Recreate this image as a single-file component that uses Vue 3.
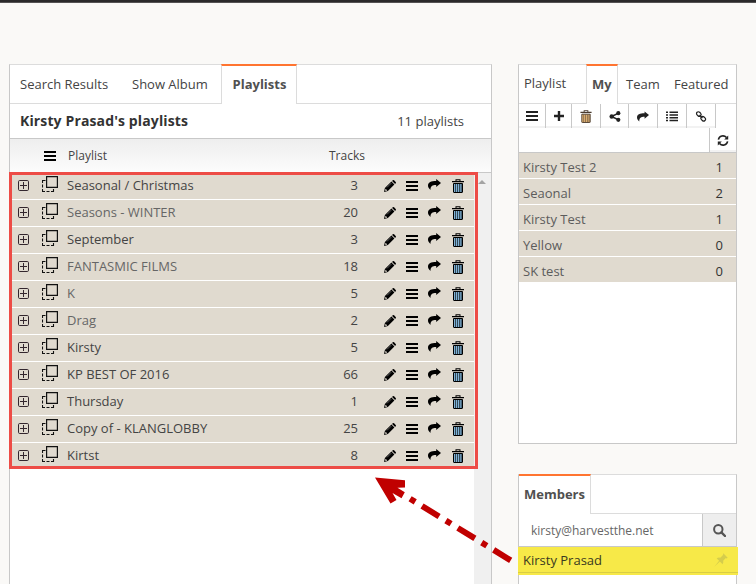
<template>
  <div class="page">
    <svg class="sprite">
      <defs>
        <symbol id="bars" viewBox="0 0 12 10">
          <path d="M0 0h12v2H0zM0 4h12v2H0zM0 8h12v2H0z" />
        </symbol>
        <symbol id="plus-box" viewBox="0 0 11 11">
          <rect x="0.5" y="0.5" width="10" height="10" rx="1.2" fill="none" stroke="currentColor" />
          <path d="M5 2h1v3h3v1H6v3H5V6H2V5h3z" />
        </symbol>
        <symbol id="copy" viewBox="0 0 16 16">
          <path d="M4.600 0.600h10.800v10.800h-10.800z" fill="none" stroke="currentColor" stroke-width="1.200" />
          <path d="M3.500 4.500H0.500V7M0.500 8.500v3M0.500 13v2.500H3M4.500 15.500h3M9 15.500H11.500V13" fill="none" stroke="currentColor" stroke-width="1.100" />
        </symbol>
        <symbol id="pencil" viewBox="0 0 12 12">
          <path d="M0 12l0.9-3.900L7.400 1.600 10.400 4.600 3.900 11.100zM8.100 0.900l0.600-0.600q0.700-0.600 1.400 0l1.600 1.600q0.600 0.700 0 1.400l-0.600 0.600z" />
          <path d="M1.600 8.700l1.700 1.700-1.600 0.500-0.600-0.600z" fill="#e0dacf" />
          <path d="M3 7.400l4.300-4.300" stroke="#999" stroke-width="0.600" />
        </symbol>
        <symbol id="share" viewBox="0 0 13 11">
          <path d="M8.200 0l4.800 4-4.800 4V5.900C4.800 5.800 2.300 6.800 2.500 11 0.800 9.600 0 8.200 0 6.600 0 3.400 3 2 8.200 2z" />
        </symbol>
        <symbol id="trash" viewBox="0 0 12 14">
          <path d="M0 2h12v1.200H0zM3.500 2V0.200h5V2H7.500V1.200h-3V2z" />
          <path d="M1.500 4.500h9V13q0 0.500-0.500 0.500H2q-0.500 0-0.500-0.500z" class="can" stroke="currentColor" />
          <path d="M3.500 5v8M5.500 5v8M7.500 5v8M9.200 5v8" class="ribs" stroke="currentColor" />
        </symbol>
        <symbol id="plus" viewBox="0 0 10 10">
          <path d="M3.800 0h2.400v3.800H10v2.400H6.200V10H3.800V6.200H0V3.800h3.800z" />
        </symbol>
        <symbol id="nodes" viewBox="0 0 11 11">
          <path d="M2.200 5.500L9 2.200M2.200 5.500L9 8.800" stroke="currentColor" stroke-width="1.500" />
          <circle cx="2.200" cy="5.500" r="2.200" />
          <circle cx="8.800" cy="2.200" r="2.100" />
          <circle cx="8.800" cy="8.800" r="2.100" />
        </symbol>
        <symbol id="list" viewBox="0 0 12 10">
          <path d="M0 0h2v1.500H0zM0 2.800h2v1.500H0zM0 5.500h2v1.500H0zM0 8.200h2v1.500H0zM3.500 0H12v1.500H3.500zM3.500 2.800H12v1.500H3.500zM3.500 5.500H12V7H3.500zM3.500 8.200H12v1.500H3.500z" />
        </symbol>
        <symbol id="link" viewBox="0 0 12 12">
          <g fill="none" stroke="currentColor" stroke-width="1.300">
            <rect x="0.900" y="1.300" width="5.400" height="4" rx="2" transform="rotate(45 3.600 3.300)" />
            <rect x="5.700" y="6.500" width="5.400" height="4" rx="2" transform="rotate(45 8.400 8.500)" />
            <path d="M4.400 4.400l3.200 3.200" />
          </g>
        </symbol>
        <symbol id="refresh" viewBox="0 0 11 11">
          <path d="M0.900 4.700C1.600 0.600 6.500-0.300 9 2.600M10.100 6.300C9.400 10.400 4.500 11.300 2 8.400" fill="none" stroke="currentColor" stroke-width="1.600" />
          <path d="M10.700 0.400v4H6.700zM0.300 10.600v-4h4z" />
        </symbol>
        <symbol id="search" viewBox="0 0 13 13">
          <circle cx="5.300" cy="5.300" r="4.200" fill="none" stroke="currentColor" stroke-width="2" />
          <path d="M8.400 8.400l3.600 3.600" stroke="currentColor" stroke-width="2.400" stroke-linecap="round" />
        </symbol>
        <symbol id="pin" viewBox="0 0 14 14">
          <path d="M9.300 0.300l4.400 4.400-1 0.700-0.900-0.300-2.600 2.600q0.500 2-0.700 3.500L5.900 8.600 0.300 13.700 5.100 7.800 2.700 5.400q1.500-1.300 3.600-0.700L9 2z" />
        </symbol>
      </defs>
    </svg>

    <main class="panel browser">
      <nav class="tabs">
        <a class="tab">Search Results</a>
        <a class="tab second">Show Album</a>
        <a class="tab active">Playlists</a>
      </nav>
      <div class="heading">
        <h1>Kirsty Prasad's playlists</h1>
        <span>{{ playlists.length }} playlists</span>
      </div>
      <div class="columns">
        <svg class="bars"><use href="#bars" /></svg>
        <span class="name">Playlist</span>
        <span class="tracks">Tracks</span>
      </div>
      <div class="body">
        <ul class="rows">
          <li v-for="item in playlists" :key="item.name" class="row">
            <svg class="expand"><use href="#plus-box" /></svg>
            <svg class="copy"><use href="#copy" /></svg>
            <span :class="['name', { soft: item.soft }]">{{ item.name }}</span>
            <span class="count">{{ item.tracks }}</span>
            <span class="actions">
              <svg class="pencil"><use href="#pencil" /></svg>
              <svg class="bars"><use href="#bars" /></svg>
              <svg class="share"><use href="#share" /></svg>
              <svg class="trash"><use href="#trash" /></svg>
            </span>
          </li>
        </ul>
        <div class="scrollbar"><i></i></div>
        <div class="highlight"></div>
      </div>
    </main>

    <aside class="side">
      <section class="panel mine">
        <nav class="tabs">
          <a class="tab first">Playlist</a>
          <a class="tab active">My</a>
          <a class="tab">Team</a>
          <a class="tab">Featured</a>
        </nav>
        <div class="toolbar">
          <button v-for="icon in tools" :key="icon" :class="'tool-' + icon">
            <svg><use :href="'#' + icon" /></svg>
          </button>
        </div>
        <div class="toolbar end">
          <button class="tool-refresh"><svg><use href="#refresh" /></svg></button>
        </div>
        <ul class="list">
          <li v-for="item in mine" :key="item.name">
            <span>{{ item.name }}</span>
            <b>{{ item.count }}</b>
          </li>
        </ul>
      </section>

      <section class="panel members">
        <nav class="tabs">
          <a class="tab active">Members</a>
        </nav>
        <div class="search">
          <input v-model="query" type="text" />
          <button><svg><use href="#search" /></svg></button>
        </div>
        <div class="member">
          <span>Kirsty Prasad</span>
          <svg><use href="#pin" /></svg>
        </div>
      </section>
    </aside>

    <svg class="arrow" viewBox="0 0 756 584">
      <path d="M375 477.500L405 480.300V487.500L397.500 487.800 404.800 492.300 401.500 498.300 392.500 493 396.500 500 390.500 503.500z" />
      <line x1="410.100" y1="498.700" x2="510.900" y2="560.500" />
    </svg>
  </div>
</template>

<script setup>
import { ref } from 'vue'

const playlists = [
  { name: 'Seasonal / Christmas', tracks: 3 },
  { name: 'Seasons - WINTER', tracks: 20, soft: true },
  { name: 'September', tracks: 3 },
  { name: 'FANTASMIC FILMS', tracks: 18, soft: true },
  { name: 'K', tracks: 5, soft: true },
  { name: 'Drag', tracks: 2, soft: true },
  { name: 'Kirsty', tracks: 5 },
  { name: 'KP BEST OF 2016', tracks: 66 },
  { name: 'Thursday', tracks: 1 },
  { name: 'Copy of - KLANGLOBBY', tracks: 25 },
  { name: 'Kirtst', tracks: 8 }
]

const tools = ['bars', 'plus', 'trash', 'nodes', 'share', 'list', 'link']

const mine = [
  { name: 'Kirsty Test 2', count: 1 },
  { name: 'Seaonal', count: 2 },
  { name: 'Kirsty Test', count: 1 },
  { name: 'Yellow', count: 0 },
  { name: 'SK test', count: 0 }
]

const query = ref('kirsty@harvestthe.net')
</script>

<style>
body {
  margin: 0;
  overflow: hidden;
}
</style>

<style scoped>
* {
  box-sizing: border-box;
}
.page {
  position: relative;
  display: flex;
  align-items: flex-start;
  gap: 26px;
  height: 584px;
  padding: 62px 0 0 9px;
  border-top: 2px solid #2b2a2b;
  background: #faf9f7;
  box-shadow: inset 0 1px #555354;
  color: #444;
  font: 13px/18px "Open Sans", "Noto Sans", sans-serif;
  overflow: hidden;
}
.sprite {
  position: absolute;
  width: 0;
  height: 0;
}
svg {
  display: block;
  flex: none;
  fill: currentColor;
}
ul {
  margin: 0;
  padding: 0;
  list-style: none;
}
.panel {
  border: 1px solid #c8c8c8;
  border-top-color: #dcdcdc;
  background: #fff;
}

/* tabs */
.tabs {
  display: flex;
  height: 39px;
  border-bottom: 1px solid #dcdcdc;
}
.tab {
  padding-top: 10px;
  white-space: nowrap;
}
.tab.active {
  height: 40px;
  margin-top: -1px;
  padding-top: 9px;
  border: solid #dcdcdc;
  border-width: 0 1px;
  border-top: 2px solid #ff7430;
  background: #fff;
  color: #505050;
  font-weight: 700;
}

/* playlist browser */
.browser {
  width: 483px;
  height: 540px;
}
.browser .tab {
  width: 112px;
  padding-left: 10px;
}
.browser .tab.second {
  width: 99px;
}
.browser .tab.active {
  width: 76px;
  padding-left: 10.5px;
}
.heading {
  display: flex;
  justify-content: space-between;
  height: 35px;
  padding: 8px 27px 0 10px;
  border-bottom: 1px solid #c8c8c8;
}
.heading h1 {
  margin: 0;
  color: #333;
  font-size: 14px;
  line-height: 18px;
  letter-spacing: 0.13px;
}
.columns {
  display: flex;
  align-items: center;
  height: 34px;
  padding-left: 34px;
  border-bottom: 1px solid #c8c8c8;
  background: linear-gradient(#eee, #fcfcfc);
  font-size: 12px;
}
.bars {
  width: 12px;
  height: 10px;
  color: #000;
}
.columns .name {
  width: 273px;
  padding-left: 12px;
}
.body {
  position: relative;
  display: flex;
  height: 430px;
}
.rows {
  flex: 1;
}
.row {
  display: flex;
  align-items: flex-start;
  height: 27px;
  padding-left: 8px;
  border-bottom: 1px solid #fff;
  background: #e0dacf;
}
.row:last-child {
  height: 26px;
}
.expand {
  width: 11px;
  height: 11px;
  margin-top: 7px;
  color: #33262e;
}
.copy {
  width: 16px;
  height: 16px;
  margin: 3px 9px 0 13px;
  color: #111;
}
.row .name {
  width: 240px;
  margin-top: 3px;
}
.row .soft {
  color: #666;
}
.count {
  width: 51px;
  margin-top: 3px;
  text-align: right;
}
.actions {
  display: flex;
  padding-left: 26px;
  color: #000;
}
.pencil {
  width: 12px;
  height: 12px;
  margin-top: 7px;
}
.actions .bars {
  margin: 8px 10px 0 10px;
}
.share {
  width: 13px;
  height: 11px;
  margin-top: 6px;
}
.trash {
  width: 12px;
  height: 14px;
  margin: 6px 0 0 11px;
}
.can {
  fill: #7fb2d6;
}
.ribs {
  stroke-width: 0.6;
}
.scrollbar {
  width: 17px;
  background: #f0f0f0;
}
.scrollbar i {
  display: block;
  width: 0;
  margin: 7px 0 0 4px;
  border: 4px solid transparent;
  border-top: 0;
  border-bottom-color: #a3a3a3;
}
.highlight {
  position: absolute;
  top: -1px;
  left: -1px;
  width: 469px;
  height: 297px;
  border: 3px solid #ed4c46;
}

/* right column */
.side {
  display: flex;
  flex-direction: column;
  gap: 30px;
  width: 219px;
}
.mine {
  height: 380px;
}
.mine .tab {
  padding-left: 8px;
}
.mine .tab.first {
  width: 67px;
  padding: 9px 0 0 5px;
}
.mine .tab.active {
  width: 32px;
  padding-left: 5px;
}
.mine .tab:nth-child(3) {
  width: 48px;
}
.toolbar {
  display: flex;
  height: 24px;
}
.toolbar.end {
  justify-content: flex-end;
  height: 25px;
  border-bottom: 1px solid #c8c8c8;
}
.toolbar button {
  display: flex;
  align-items: center;
  justify-content: center;
  width: 29px;
  padding: 0;
  border: solid #c8c8c8;
  border-width: 0 1px 0 0;
  background: linear-gradient(#fff 22px, #f2f2f2 22px);
  color: #222;
}
.toolbar svg {
  width: 12px;
  height: 11px;
}
.toolbar .tool-bars {
  width: 27px;
}
.tool-bars svg {
  height: 10px;
}
.toolbar .tool-plus {
  width: 26px;
}
.tool-plus svg {
  height: 10px;
}
.toolbar .tool-trash {
  color: #4a3a2c;
}
.tool-trash svg {
  height: 13px;
}
.tool-trash .can,
.tool-trash svg {
  --can: #e8b878;
}
.toolbar .tool-nodes {
  width: 28px;
}
.toolbar .tool-refresh {
  width: 27px;
  border-width: 0 0 0 1px;
}
.can {
  fill: var(--can, #7fb2d6);
}
.list li {
  display: flex;
  justify-content: space-between;
  height: 26px;
  padding: 5px 13px 0 4px;
  border-bottom: 1px solid #fff;
  background: #e0dacf;
  color: #5c5c5c;
}
.list b {
  color: #333;
  font-weight: 400;
}
.members {
  height: 130px;
}
.members .tab.active {
  width: 72px;
  padding-left: 5px;
  border-left: 0;
}
.search {
  display: flex;
  height: 33px;
  border-bottom: 1px solid #c8c8c8;
}
.search input {
  flex: 1;
  min-width: 0;
  padding: 0 0 0 12px;
  border: 0;
  outline: 0;
  background: #fff;
  color: #666;
  font: 12px "Open Sans", "Noto Sans", sans-serif;
}
.search button {
  display: flex;
  align-items: center;
  justify-content: center;
  width: 34px;
  padding: 0;
  border: solid #c8c8c8;
  border-width: 0 0 0 1px;
  background: #eee;
  color: #555;
}
.search svg {
  width: 13px;
  height: 13px;
}
.member {
  display: flex;
  align-items: center;
  justify-content: space-between;
  width: 220px;
  height: 28px;
  margin-left: -1px;
  padding: 0 10px 2px 5px;
  background: linear-gradient(#f7e948 25px, #d9cd45 25px, #d9cd45 26px, #f7e948 26px);
  color: #3a3920;
}
.member svg {
  width: 14px;
  height: 14px;
  color: #d5cd4c;
}

/* callout */
.arrow {
  position: absolute;
  top: -2px;
  left: 0;
  width: 756px;
  height: 584px;
  fill: #c00000;
  pointer-events: none;
}
.arrow line {
  stroke: #c00000;
  stroke-width: 6;
  stroke-dasharray: 6 8 20 8;
}
</style>
